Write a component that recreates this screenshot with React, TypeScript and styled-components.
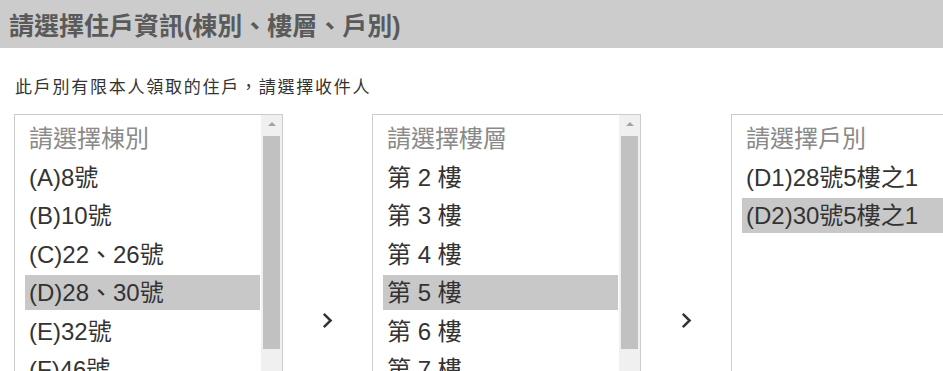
import React from "react";
import styled, { createGlobalStyle } from "styled-components";

const GlobalStyle = createGlobalStyle`
  html, body {
    margin: 0;
    padding: 0;
    overflow: hidden;
    background: #ffffff;
  }
  body {
    font-family: "Liberation Sans", "Noto Sans CJK TC", Arial, sans-serif;
  }
`;

const Header = styled.header`
  height: 48px;
  background: #cccccc;
  display: flex;
  align-items: center;
  padding: 0 9px;
  font-size: 25px;
  font-weight: bold;
  color: #5a5a5a;
  white-space: nowrap;
`;

const Content = styled.main`
  padding: 28px 0 0 14px;
`;

const Notice = styled.p`
  margin: 0 0 14px 1px;
  font-size: 17px;
  letter-spacing: 1.75px;
  line-height: 24px;
  color: #333333;
  white-space: nowrap;
`;

const Row = styled.div`
  display: flex;
  align-items: center;
  width: max-content;
`;

const ListBox = styled.div`
  box-sizing: border-box;
  width: 269px;
  height: 412px;
  border: 1px solid #cccccc;
  display: flex;
  flex-shrink: 0;
  overflow: hidden;
`;

const OptionList = styled.ul<{ $scroll: boolean }>`
  flex: 1;
  min-width: 0;
  margin: 0;
  list-style: none;
  padding: 6px ${(p) => (p.$scroll ? "1px" : "0")} 0 10px;
  display: flex;
  flex-direction: column;
  gap: 3.5px;
  overflow: hidden;
`;

const Option = styled.li<{ $selected?: boolean; $placeholder?: boolean }>`
  flex-shrink: 0;
  height: 35px;
  line-height: 35px;
  padding-left: 4px;
  font-size: 24px;
  white-space: nowrap;
  color: ${(p) => (p.$placeholder ? "#8a8a8a" : "#333333")};
  background: ${(p) => (p.$selected ? "#c8c8c8" : "transparent")};
`;

const Scrollbar = styled.div`
  width: 21px;
  flex-shrink: 0;
  background: #f0f0f0;
  display: flex;
  flex-direction: column;
`;

const ScrollButton = styled.div`
  height: 21px;
  display: flex;
  align-items: center;
  justify-content: center;
`;

const Triangle = styled.span`
  width: 0;
  height: 0;
  border-left: 4px solid transparent;
  border-right: 4px solid transparent;
  border-bottom: 4px solid #a3a3a3;
  margin-top: -3px;
`;

const Thumb = styled.div`
  height: 213px;
  margin: 0 2px;
  background: #c1c1c1;
`;

const ArrowCell = styled.div<{ $width: number }>`
  width: ${(p) => p.$width}px;
  flex-shrink: 0;
  display: flex;
  justify-content: center;
  align-items: center;
`;

type Item = { label: string; selected?: boolean };

const Chevron = () => (
  <svg width="11" height="17" viewBox="0 0 11 17" fill="none">
    <polyline
      points="1.8,1.8 8.6,8.5 1.8,15.2"
      stroke="#333333"
      strokeWidth="2.5"
      strokeLinecap="butt"
      strokeLinejoin="miter"
    />
  </svg>
);

const SelectList = ({
  placeholder,
  items,
  scroll,
}: {
  placeholder: string;
  items: Item[];
  scroll: boolean;
}) => (
  <ListBox>
    <OptionList $scroll={scroll}>
      <Option $placeholder>{placeholder}</Option>
      {items.map((it) => (
        <Option key={it.label} $selected={it.selected}>
          {it.label}
        </Option>
      ))}
    </OptionList>
    {scroll && (
      <Scrollbar>
        <ScrollButton>
          <Triangle />
        </ScrollButton>
        <Thumb />
      </Scrollbar>
    )}
  </ListBox>
);

const buildings: Item[] = [
  { label: "(A)8號" },
  { label: "(B)10號" },
  { label: "(C)22、26號" },
  { label: "(D)28、30號", selected: true },
  { label: "(E)32號" },
  { label: "(F)46號" },
];

const floors: Item[] = [
  { label: "第 2 樓" },
  { label: "第 3 樓" },
  { label: "第 4 樓" },
  { label: "第 5 樓", selected: true },
  { label: "第 6 樓" },
  { label: "第 7 樓" },
];

const units: Item[] = [
  { label: "(D1)28號5樓之1" },
  { label: "(D2)30號5樓之1", selected: true },
];

export default function App() {
  return (
    <>
      <GlobalStyle />
      <Header>請選擇住戶資訊(棟別、樓層、戶別)</Header>
      <Content>
        <Notice>此戶別有限本人領取的住戶，請選擇收件人</Notice>
        <Row>
          <SelectList placeholder="請選擇棟別" items={buildings} scroll />
          <ArrowCell $width={89}>
            <Chevron />
          </ArrowCell>
          <SelectList placeholder="請選擇樓層" items={floors} scroll />
          <ArrowCell $width={90}>
            <Chevron />
          </ArrowCell>
          <SelectList placeholder="請選擇戶別" items={units} scroll={false} />
        </Row>
      </Content>
    </>
  );
}
